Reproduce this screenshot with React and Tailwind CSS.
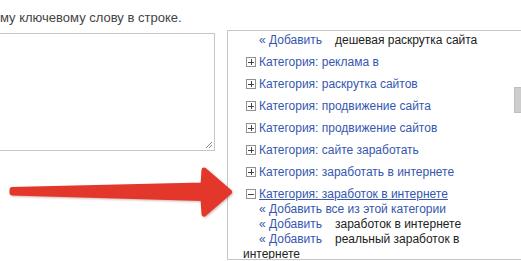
import React from 'react'

const Plus = ({ open }) => (
  <span className="inline-flex w-[10px] h-[10px] border border-[#909090] bg-white items-center justify-center mr-[3px] ml-[3px] align-[-1px] relative">
    <span className="absolute w-[6px] h-px bg-[#444]" />
    {!open && <span className="absolute w-px h-[6px] bg-[#444]" />}
  </span>
)

const Category = ({ title, open }) => (
  <div className="h-[15px] leading-[15px] mt-[7px] whitespace-nowrap">
    <Plus open={open} />
    <a className={`text-[#3557b0] ${open ? 'underline' : ''}`}>Категория: {title}</a>
  </div>
)

const AddRow = ({ text, link = '« Добавить' }) => (
  <div className="leading-[15px] indent-[16px]">
    <a className="inline-block w-[76px] indent-0 text-[#3557b0]">{link}</a>
    {text}
  </div>
)

export default function App() {
  return (
    <div className="relative w-[521px] h-[261px] bg-white overflow-hidden" style={{ fontFamily: '"Liberation Sans", Arial, sans-serif' }}>
      <p className="text-[13px] leading-[15px] text-[#444] pt-[10px] h-[30px] whitespace-nowrap">
        му ключевому слову в строке.
      </p>

      <div className="flex items-start">
        {/* textarea */}
        <div className="relative w-[225px] -ml-[10px] mt-[3px] h-[118px] border border-[#c6c6c6] bg-white shrink-0">
          <svg className="absolute right-[1px] bottom-[1px]" width="9" height="9" viewBox="0 0 9 9">
            <path d="M8 2 L2 8 M8 5 L5 8" stroke="#8a8a8a" strokeWidth="1" />
          </svg>
        </div>

        {/* keyword box */}
        <div className="relative ml-[12px] w-[320px] h-[230px] border border-[#c6c6c6] bg-white overflow-hidden shrink-0 text-[12px] text-[#222]">
          <div className="w-[274px] pl-[15px] pt-[2px]">
            <AddRow text="дешевая раскрутка сайта" />
            <Category title="реклама в" />
            <Category title="раскрутка сайтов" />
            <Category title="продвижение сайта" />
            <Category title="продвижение сайтов" />
            <Category title="сайте заработать" />
            <Category title="заработать в интернете" />
            <Category title="заработок в интернете" open />
            <div className="leading-[15px] indent-[16px]">
              <a className="text-[#3557b0]">« Добавить все из этой категории</a>
            </div>
            <AddRow text="заработок в интернете" />
            <AddRow text="реальный заработок в интернете" />
          </div>
          <div className="absolute left-[286px] top-[56px] w-[17px] h-[26px] bg-[#cdcdcd] border border-[#bdbdbd]" />
        </div>
      </div>

      {/* red arrow */}
      <svg className="absolute left-0 top-0 pointer-events-none" width="521" height="261" viewBox="0 0 521 261">
        <path
          d="M12 189.5 L203 185 L204 170 L229.5 192 L204 214 L203 198.5 L12 193 Z"
          fill="#e3372c"
          stroke="#e3372c"
          strokeWidth="5"
          strokeLinejoin="round"
          style={{ filter: 'drop-shadow(1px 1px 1px rgba(120,40,30,0.35))' }}
        />
      </svg>
    </div>
  )
}
